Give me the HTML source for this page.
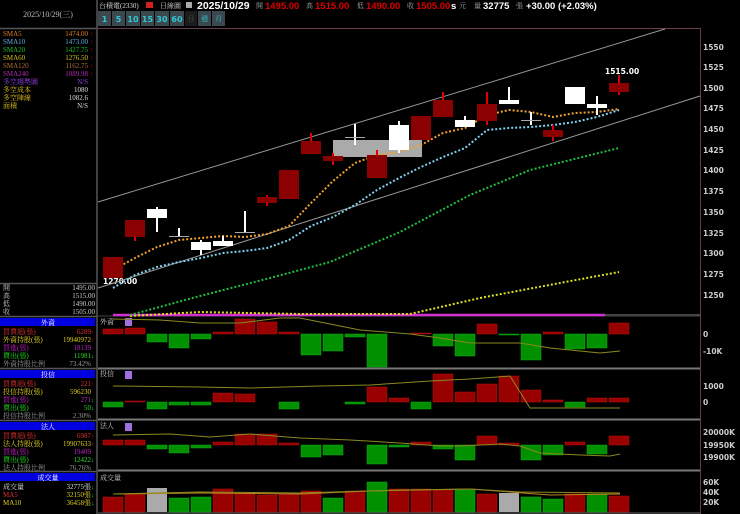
<!DOCTYPE html>
<html><head><meta charset="utf-8"><style>
body{margin:0;background:#000;width:740px;height:514px;overflow:hidden;font-family:"Liberation Serif","Noto Serif CJK SC",serif}
svg{position:absolute;left:0;top:0}
</style></head><body>
<svg width="740" height="514" viewBox="0 0 740 514" xmlns="http://www.w3.org/2000/svg" font-family="Liberation Serif, Noto Serif CJK TC, serif">
<rect width="740" height="514" fill="#000"/>
<g stroke="#555" fill="none" stroke-width="1.5">
<line x1="97" y1="0" x2="97" y2="514"/>
<line x1="0" y1="28.5" x2="97" y2="28.5"/>
<line x1="0" y1="283.5" x2="97" y2="283.5"/>
<line x1="0" y1="316.5" x2="97" y2="316.5"/>
<line x1="0" y1="368.5" x2="97" y2="368.5"/>
<line x1="0" y1="420.5" x2="97" y2="420.5"/>
<line x1="0" y1="471.5" x2="97" y2="471.5"/>
</g>
<text x="48" y="17" fill="#bbb" font-size="8" text-anchor="middle">2025/10/29(三)</text>
<g font-size="7">
<text x="3" y="36" fill="#e08020">SMA5</text><text x="88" y="36" fill="#e08020" text-anchor="end">1474.00</text>
<text x="3" y="44" fill="#60b0e0">SMA10</text><text x="88" y="44" fill="#60b0e0" text-anchor="end">1473.00</text>
<text x="3" y="52" fill="#20c020">SMA20</text><text x="88" y="52" fill="#20c020" text-anchor="end">1427.75</text>
<text x="3" y="60" fill="#d0c020">SMA60</text><text x="88" y="60" fill="#d0c020" text-anchor="end">1276.50</text>
<text x="3" y="68" fill="#b07030">SMA120</text><text x="88" y="68" fill="#b07030" text-anchor="end">1162.75</text>
<text x="3" y="76" fill="#b030b0">SMA240</text><text x="88" y="76" fill="#b030b0" text-anchor="end">1089.98</text>
<text x="3" y="84" fill="#9040e0">多空趨勢圖</text><text x="88" y="84" fill="#9040e0" text-anchor="end">N/S</text>
<text x="3" y="92" fill="#e0c020">多空成本</text><text x="88" y="92" fill="#ddd" text-anchor="end">1080</text>
<text x="3" y="100" fill="#e0c020">多空陣線</text><text x="88" y="100" fill="#ddd" text-anchor="end">1082.6</text>
<text x="3" y="108" fill="#e0c020">面積</text><text x="88" y="108" fill="#ddd" text-anchor="end">N/S</text>
</g>
<g fill="#e00" font-size="6"><text x="90" y="36">↑</text><text x="90" y="44">↑</text><text x="90" y="52">↑</text><text x="90" y="60">↑</text><text x="90" y="68">↑</text><text x="90" y="76">↑</text></g>
<g font-size="7" fill="#ccc">
<text x="3" y="290">開</text><text x="95" y="290" text-anchor="end">1495.00</text>
<text x="3" y="298">高</text><text x="95" y="298" text-anchor="end">1515.00</text>
<text x="3" y="306">低</text><text x="95" y="306" text-anchor="end">1490.00</text>
<text x="3" y="314">收</text><text x="95" y="314" text-anchor="end">1505.00</text>
</g>
<g fill="#0000e0"><rect x="0" y="318" width="95" height="8"/><rect x="0" y="370" width="95" height="8"/><rect x="0" y="422" width="95" height="8"/><rect x="0" y="473" width="95" height="8"/></g>
<g font-size="7" fill="#fff" text-anchor="middle"><text x="48" y="325">外資</text><text x="48" y="377">投信</text><text x="48" y="429">法人</text><text x="48" y="480">成交量</text></g>
<g font-size="7">
<text x="3" y="334" fill="#e03030">買賣超(張)</text><text x="91" y="334" fill="#e03030" text-anchor="end">6289</text>
<text x="3" y="342" fill="#e0d020">外資持股(張)</text><text x="91" y="342" fill="#e0d020" text-anchor="end">19940972</text>
<text x="3" y="350" fill="#c020c0">買進(張)</text><text x="91" y="350" fill="#c020c0" text-anchor="end">18139</text>
<text x="3" y="358" fill="#20e020">賣出(張)</text><text x="91" y="358" fill="#20e020" text-anchor="end">11981</text>
<text x="3" y="366" fill="#999">外資持股比例</text><text x="91" y="366" fill="#999" text-anchor="end">73.42%</text>
<text x="3" y="386" fill="#e03030">買賣超(張)</text><text x="91" y="386" fill="#e03030" text-anchor="end">221</text>
<text x="3" y="394" fill="#e0d020">投信持股(張)</text><text x="91" y="394" fill="#e0d020" text-anchor="end">596230</text>
<text x="3" y="402" fill="#c020c0">買進(張)</text><text x="91" y="402" fill="#c020c0" text-anchor="end">271</text>
<text x="3" y="410" fill="#20e020">賣出(張)</text><text x="91" y="410" fill="#20e020" text-anchor="end">50</text>
<text x="3" y="418" fill="#999">投信持股比例</text><text x="91" y="418" fill="#999" text-anchor="end">2.30%</text>
<text x="3" y="438" fill="#e03030">買賣超(張)</text><text x="91" y="438" fill="#e03030" text-anchor="end">6987</text>
<text x="3" y="446" fill="#e0d020">法人持股(張)</text><text x="91" y="446" fill="#e0d020" text-anchor="end">19907633</text>
<text x="3" y="454" fill="#c020c0">買進(張)</text><text x="91" y="454" fill="#c020c0" text-anchor="end">19409</text>
<text x="3" y="462" fill="#20e020">賣出(張)</text><text x="91" y="462" fill="#20e020" text-anchor="end">12422</text>
<text x="3" y="470" fill="#999">法人持股比例</text><text x="91" y="470" fill="#999" text-anchor="end">76.76%</text>
<text x="3" y="489" fill="#ddd">成交量</text><text x="91" y="489" fill="#ddd" text-anchor="end">32775張</text>
<text x="3" y="497" fill="#e03030">MA5</text><text x="91" y="497" fill="#e0d020" text-anchor="end">32150張</text>
<text x="3" y="505" fill="#e0d020">MA10</text><text x="91" y="505" fill="#e0d020" text-anchor="end">36458張</text>
</g>
<g font-size="6" fill="#e00"><text x="91" y="334">↑</text><text x="91" y="342">↑</text><text x="91" y="386">↑</text><text x="91" y="438">↑</text><text x="91" y="446">↑</text></g>
<g font-size="6" fill="#2e2"><text x="91" y="358">↓</text><text x="91" y="402">↓</text><text x="91" y="410">↓</text><text x="91" y="462">↓</text><text x="91" y="489">↓</text><text x="91" y="497">↓</text><text x="91" y="505">↓</text></g>

<text x="99" y="8" fill="#ddd" font-size="7">台積電(2330)</text>
<rect x="146" y="2" width="7" height="6" fill="#d02020"/>
<text x="160" y="8" fill="#ccc" font-size="7">日線圖</text>
<rect x="186" y="2" width="6" height="6" fill="#aaa"/>
<g font-family="Liberation Sans, sans-serif" font-weight="bold" font-size="9.5">
<text x="197" y="9" fill="#fff" font-size="10.5">2025/10/29</text>
<text x="265" y="9" fill="#d00">1495.00</text>
<text x="315" y="9" fill="#d00">1515.00</text>
<text x="366" y="9" fill="#d00">1490.00</text>
<text x="416" y="9" fill="#d00">1505.00</text>
<text x="451" y="9" fill="#fff">s</text>
<text x="483" y="9" fill="#fff">32775</text>
<text x="526" y="9" fill="#fff">+30.00 (+2.03%)</text>
</g>
<g font-size="7" fill="#aaa"><text x="256" y="8">開</text><text x="306" y="8">高</text><text x="357" y="8">低</text><text x="407" y="8">收</text><text x="459" y="8">元</text><text x="474" y="8">量</text><text x="516" y="8">張</text></g>
<g fill="#3c4850">
<rect x="98" y="11" width="13" height="15"/><rect x="112" y="11" width="13" height="15"/><rect x="126" y="11" width="14" height="15"/><rect x="141" y="11" width="13" height="15"/><rect x="155" y="11" width="14" height="15"/><rect x="170" y="11" width="14" height="15"/><rect x="198" y="11" width="13" height="15"/><rect x="212" y="11" width="13" height="15"/></g>
<rect x="185" y="11" width="12" height="15" fill="#1c1c1c"/>
<g fill="#30c8d0" font-family="DejaVu Sans, sans-serif" font-weight="bold" font-size="8" text-anchor="middle">
<text x="104.5" y="22">1</text><text x="118.5" y="22">5</text><text x="133" y="22">10</text><text x="147.5" y="22">15</text><text x="162" y="22">30</text><text x="177" y="22">60</text></g>
<g font-size="7" text-anchor="middle"><text x="191" y="21" fill="#555">日</text><text x="204.5" y="21" fill="#30c8d0">週</text><text x="218.5" y="21" fill="#30c8d0">月</text></g>

<line x1="98" y1="28.5" x2="700" y2="28.5" stroke="#6a3a50"/>
<line x1="700.5" y1="28" x2="700.5" y2="514" stroke="#6a3a50"/>
<line x1="98" y1="316" x2="700" y2="316" stroke="#444"/>
<g stroke="#777" stroke-width="2"><line x1="98" y1="368.5" x2="700" y2="368.5"/><line x1="98" y1="419.5" x2="700" y2="419.5"/><line x1="98" y1="470.5" x2="700" y2="470.5"/></g>
<line x1="98" y1="513" x2="700" y2="513" stroke="#666"/>
<g fill="#ccc" font-family="DejaVu Sans, sans-serif" font-weight="bold" font-size="7.5">
<text x="703" y="50">1550</text><text x="703" y="70">1525</text><text x="703" y="91">1500</text><text x="703" y="111">1475</text><text x="703" y="132">1450</text><text x="703" y="153">1425</text><text x="703" y="173">1400</text><text x="703" y="194">1375</text><text x="703" y="215">1350</text><text x="703" y="236">1325</text><text x="703" y="256">1300</text><text x="703" y="277">1275</text><text x="703" y="298">1250</text>
<text x="703" y="337">0</text><text x="703" y="354">-10K</text>
<text x="703" y="389">1000</text><text x="703" y="405">0</text>
<text x="703" y="435">20000K</text><text x="703" y="448">19950K</text><text x="703" y="460">19900K</text>
<text x="703" y="485">60K</text><text x="703" y="495">40K</text><text x="703" y="505">20K</text>
<text x="605" y="74" fill="#fff">1515.00</text>
<text x="103" y="284" fill="#fff">1270.00</text>
</g>
<g stroke="#999" stroke-width="1"><line x1="98" y1="202" x2="665" y2="29"/><line x1="98" y1="288" x2="700" y2="96"/></g>
<line x1="113" y1="315" x2="605" y2="315" stroke="#d030d0" stroke-width="2.5"/>
<line x1="605" y1="315" x2="700" y2="315" stroke="#444" stroke-width="2"/>
<rect x="333" y="140" width="89" height="17" fill="#aaa"/>
<g fill="none" stroke-width="2" stroke-dasharray="2 2">
<polyline stroke="#e0e020" points="130,316 200,312 300,314 410,314 480,298 560,283 619,272"/>
<polyline stroke="#20c040" points="130,315 200,296 270,278 330,262 400,232 470,195 530,170 619,148"/>
<polyline stroke="#80d0f0" points="113,288 135,275 157,267 179,262 201,258 223,253 245,251 267,248 289,240 311,226 333,217 355,205 377,190 399,178 421,167 443,157 465,148 487,130 509,128 531,127 553,125 575,122 597,117 619,110"/>
<polyline stroke="#f0a030" points="113,270 135,258 157,247 179,240 201,238 223,236 245,237 267,234 289,226 311,203 333,181 355,163 377,155 399,152 421,145 443,133 465,128 487,115 509,110 531,112 553,117 575,113 597,112 619,109"/>
</g>
<g fill="#e00000">
<rect x="134" y="237" width="2" height="4"/><rect x="266" y="195" width="2" height="11"/><rect x="310" y="133" width="2" height="10"/><rect x="332" y="153" width="2" height="12"/><rect x="376" y="150" width="2" height="8"/><rect x="442" y="92" width="2" height="10"/><rect x="486" y="92" width="2" height="33"/><rect x="552" y="125" width="2" height="16"/><rect x="618" y="75" width="2" height="20"/>
</g>
<g fill="#8b0000">
<rect x="103" y="257" width="20" height="21"/><rect x="125" y="220" width="20" height="17"/><rect x="257" y="197" width="20" height="6"/><rect x="279" y="170" width="20" height="29"/><rect x="301" y="141" width="20" height="13"/><rect x="323" y="156" width="20" height="5"/><rect x="367" y="155" width="20" height="23"/><rect x="411" y="116" width="20" height="24"/><rect x="433" y="100" width="20" height="17"/><rect x="477" y="104" width="20" height="17"/><rect x="543" y="130" width="20" height="7"/><rect x="609" y="83" width="20" height="9"/>
</g>
<g fill="#fff">
<rect x="147" y="209" width="20" height="9"/><rect x="156" y="207" width="2" height="25"/>
<rect x="178" y="228" width="2" height="8"/>
<rect x="191" y="242" width="20" height="8"/><rect x="200" y="240" width="2" height="15"/>
<rect x="213" y="241" width="20" height="5"/><rect x="222" y="236" width="2" height="10"/>
<rect x="244" y="211" width="2" height="21"/>
<rect x="354" y="124" width="2" height="21"/>
<rect x="389" y="125" width="20" height="25"/><rect x="398" y="121" width="2" height="32"/>
<rect x="455" y="120" width="20" height="7"/><rect x="464" y="116" width="2" height="11"/>
<rect x="499" y="100" width="20" height="4"/><rect x="508" y="87" width="2" height="13"/>
<rect x="530" y="112" width="2" height="13"/>
<rect x="565" y="87" width="20" height="17"/>
<rect x="587" y="104" width="20" height="4"/><rect x="596" y="96" width="2" height="19"/>
</g>
<g stroke="#aaa"><line x1="169" y1="236.5" x2="189" y2="236.5"/><line x1="235" y1="232.5" x2="255" y2="232.5"/><line x1="345" y1="137.5" x2="365" y2="137.5"/><line x1="521" y1="120.5" x2="541" y2="120.5"/></g>

<g font-size="7" fill="#ccc"><text x="100" y="324">外資</text><text x="100" y="376">投信</text><text x="100" y="428">法人</text><text x="100" y="480">成交量</text></g>
<g fill="#a070e0"><rect x="125" y="318" width="7" height="8"/><rect x="125" y="371" width="7" height="8"/><rect x="125" y="423" width="7" height="8"/></g>

<g fill="#990000" stroke="#bb1010" stroke-width="0.5">
<rect x="103" y="329" width="20" height="5"/><rect x="125" y="328" width="20" height="6"/><rect x="213" y="332" width="20" height="2"/><rect x="235" y="319" width="20" height="15"/><rect x="257" y="322" width="20" height="12"/><rect x="279" y="332" width="20" height="2"/><rect x="411" y="333" width="20" height="1"/><rect x="477" y="324" width="20" height="10"/><rect x="543" y="332" width="20" height="2"/><rect x="609" y="323" width="20" height="11"/>
</g>
<g fill="#009000" stroke="#10b010" stroke-width="0.5">
<rect x="147" y="334" width="20" height="8"/><rect x="169" y="334" width="20" height="14"/><rect x="191" y="334" width="20" height="5"/><rect x="301" y="334" width="20" height="21"/><rect x="323" y="334" width="20" height="17"/><rect x="345" y="334" width="20" height="3"/><rect x="367" y="334" width="20" height="33"/><rect x="433" y="334" width="20" height="12"/><rect x="455" y="334" width="20" height="22"/><rect x="499" y="334" width="20" height="1"/><rect x="521" y="334" width="20" height="26"/><rect x="565" y="334" width="20" height="15"/><rect x="587" y="334" width="20" height="14"/>
</g>
<polyline fill="none" stroke="#8a8a20" stroke-width="1" points="113,319 160,320 200,323 240,323 280,318 300,318 320,322 360,330 410,334 440,338 470,343 520,343 550,348 600,353 620,351"/>

<g fill="#990000" stroke="#bb1010" stroke-width="0.5">
<rect x="125" y="401" width="20" height="1"/><rect x="213" y="393" width="20" height="9"/><rect x="235" y="394" width="20" height="8"/><rect x="367" y="387" width="20" height="15"/><rect x="389" y="398" width="20" height="4"/><rect x="433" y="374" width="20" height="28"/><rect x="455" y="392" width="20" height="10"/><rect x="477" y="384" width="20" height="18"/><rect x="499" y="376" width="20" height="26"/><rect x="521" y="390" width="20" height="12"/><rect x="543" y="400" width="20" height="2"/><rect x="587" y="398" width="20" height="4"/><rect x="609" y="398" width="20" height="4"/>
</g>
<g fill="#009000" stroke="#10b010" stroke-width="0.5">
<rect x="103" y="402" width="20" height="5"/><rect x="147" y="402" width="20" height="7"/><rect x="169" y="402" width="20" height="3"/><rect x="191" y="402" width="20" height="3"/><rect x="279" y="402" width="20" height="7"/><rect x="345" y="402" width="20" height="2"/><rect x="411" y="402" width="20" height="7"/><rect x="565" y="402" width="20" height="5"/>
</g>
<polyline fill="none" stroke="#8a8a20" stroke-width="1" points="113,386 200,387 250,388 320,386 370,385 430,381 470,379 510,376 530,408 600,408 620,408"/>

<g fill="#990000" stroke="#bb1010" stroke-width="0.5">
<rect x="103" y="440" width="20" height="5"/><rect x="125" y="440" width="20" height="5"/><rect x="213" y="442" width="20" height="3"/><rect x="235" y="434" width="20" height="11"/><rect x="257" y="434" width="20" height="11"/><rect x="279" y="443" width="20" height="2"/><rect x="411" y="442" width="20" height="3"/><rect x="477" y="436" width="20" height="9"/><rect x="499" y="443" width="20" height="2"/><rect x="565" y="442" width="20" height="3"/><rect x="609" y="436" width="20" height="9"/>
</g>
<g fill="#009000" stroke="#10b010" stroke-width="0.5">
<rect x="147" y="445" width="20" height="4"/><rect x="169" y="445" width="20" height="8"/><rect x="191" y="445" width="20" height="3"/><rect x="301" y="445" width="20" height="12"/><rect x="323" y="445" width="20" height="10"/><rect x="367" y="445" width="20" height="19"/><rect x="389" y="445" width="20" height="2"/><rect x="433" y="445" width="20" height="4"/><rect x="455" y="445" width="20" height="15"/><rect x="521" y="445" width="20" height="15"/><rect x="543" y="445" width="20" height="10"/><rect x="587" y="445" width="20" height="9"/>
</g>
<polyline fill="none" stroke="#8a8a20" stroke-width="1" points="113,435 170,434 210,437 250,434 300,438 350,440 400,443 440,446 460,446 500,444 520,446 540,453 580,455 610,456 620,454"/>

<g fill="#990000" stroke="#bb1010" stroke-width="0.5">
<rect x="103" y="497" width="20" height="15"/><rect x="125" y="494" width="20" height="18"/><rect x="213" y="489" width="20" height="23"/><rect x="235" y="494" width="20" height="18"/><rect x="257" y="495" width="20" height="17"/><rect x="279" y="494" width="20" height="18"/><rect x="301" y="491" width="20" height="21"/><rect x="345" y="491" width="20" height="21"/><rect x="389" y="489" width="20" height="23"/><rect x="411" y="489" width="20" height="23"/><rect x="433" y="490" width="20" height="22"/><rect x="477" y="494" width="20" height="18"/><rect x="565" y="494" width="20" height="18"/><rect x="609" y="496" width="20" height="16"/>
</g>
<g fill="#009000" stroke="#10b010" stroke-width="0.5">
<rect x="169" y="498" width="20" height="14"/><rect x="191" y="497" width="20" height="15"/><rect x="323" y="498" width="20" height="14"/><rect x="367" y="482" width="20" height="30"/><rect x="455" y="490" width="20" height="22"/><rect x="521" y="497" width="20" height="15"/><rect x="543" y="499" width="20" height="13"/><rect x="587" y="494" width="20" height="18"/>
</g>
<g fill="#aaa"><rect x="147" y="488" width="20" height="24"/><rect x="499" y="493" width="20" height="19"/></g>
<polyline fill="none" stroke="#c08020" stroke-width="1" points="113,494 200,493 300,494 370,491 420,490 470,489 510,492 550,495 620,494"/>
<polyline fill="none" stroke="#8a8a20" stroke-width="1" points="113,494 200,492 300,493 400,490 470,489 520,492 620,493"/>
</svg>
</body></html>
